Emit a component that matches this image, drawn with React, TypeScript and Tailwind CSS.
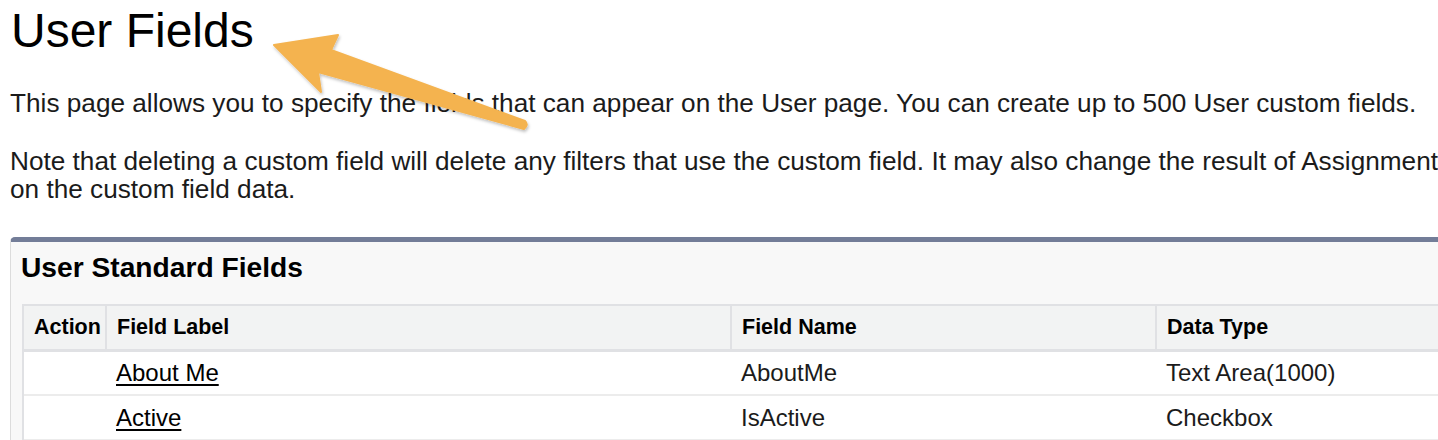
import React from "react";

const rows = [
  { label: "About Me", name: "AboutMe", type: "Text Area(1000)" },
  { label: "Active", name: "IsActive", type: "Checkbox" },
];

function Arrow() {
  // orange annotation arrow pointing at the heading
  return (
    <svg
      className="absolute left-0 top-0 pointer-events-none"
      width="600"
      height="160"
      viewBox="0 0 600 160"
    >
      <defs>
        <filter id="shadow" x="-10%" y="-10%" width="120%" height="130%">
          <feDropShadow dx="1" dy="2" stdDeviation="1.5" floodColor="#000" floodOpacity="0.25" />
        </filter>
      </defs>
      <path
        d="M274 45 L338 35 L331 50 L525 121 Q529 125 524 129 L318 72 L321 92 Z"
        fill="#f4b350"
        stroke="#f4b350"
        strokeWidth="2"
        strokeLinejoin="round"
        filter="url(#shadow)"
      />
    </svg>
  );
}

export default function App() {
  return (
    <div className="relative w-[1438px] h-[440px] overflow-hidden bg-white font-['Liberation_Sans',Arial,sans-serif] text-[#1b1b1b]">
      <div className="w-[1800px] pl-[10px] pt-[2px]">
        <h1 className="text-[48px] leading-[58px] text-black pl-[1px]">User Fields</h1>

        <p className="mt-[29px] text-[26.2px] leading-[28px] whitespace-nowrap">
          This page allows you to specify the fields that can appear on the User page. You can create up to 500 User custom fields.
        </p>
        <p className="mt-[30px] text-[26.2px] leading-[28px] whitespace-nowrap">
          Note that deleting a custom field will delete any filters that use the custom field. It may also change the result of Assignment Rules or Escalation Rules that rely
          <br />
          on the custom field data.
        </p>

        {/* Standard fields panel */}
        <div className="mt-[34px] w-[1700px] rounded-tl-[5px] border-t-[5px] border-l border-t-[#737d98] border-l-[#dcdcdc] bg-[#f8f8f8] pl-[11px] pb-4">
          <h2 className="pt-[9px] pb-[21px] -ml-[1px] text-[28.2px] leading-[32px] font-bold text-black">
            User Standard Fields
          </h2>

          <table className="w-[1690px] table-fixed border-collapse bg-white text-[24px]">
            <thead>
              <tr className="bg-[#f2f3f3] text-[21.5px] font-bold text-black">
                <th className="w-[83px] h-[45px] border-t-2 border-l-2 border-[#e0e1e4] border-b-[3px] px-[10px] text-left font-bold">
                  Action
                </th>
                <th className="w-[625px] border-t-2 border-l-2 border-[#e0e1e4] border-b-[3px] px-[10px] text-left font-bold">
                  Field Label
                </th>
                <th className="w-[425px] border-t-2 border-l-2 border-[#e0e1e4] border-b-[3px] px-[10px] text-left font-bold">
                  Field Name
                </th>
                <th className="border-t-2 border-l-2 border-[#e0e1e4] border-b-[3px] px-[10px] text-left font-bold">
                  Data Type
                </th>
              </tr>
            </thead>
            <tbody>
              {rows.map((r) => (
                <tr key={r.name} className="border-b-2 border-[#ececec]">
                  <td className="h-[45px] border-l-2 border-[#e0e1e4] px-[10px]"></td>
                  <td className="px-[10px]">
                    <a href="#" className="underline underline-offset-[3px] text-black">
                      {r.label}
                    </a>
                  </td>
                  <td className="px-[10px]">{r.name}</td>
                  <td className="px-[10px]">{r.type}</td>
                </tr>
              ))}
            </tbody>
          </table>
        </div>
      </div>

      <Arrow />
    </div>
  );
}
